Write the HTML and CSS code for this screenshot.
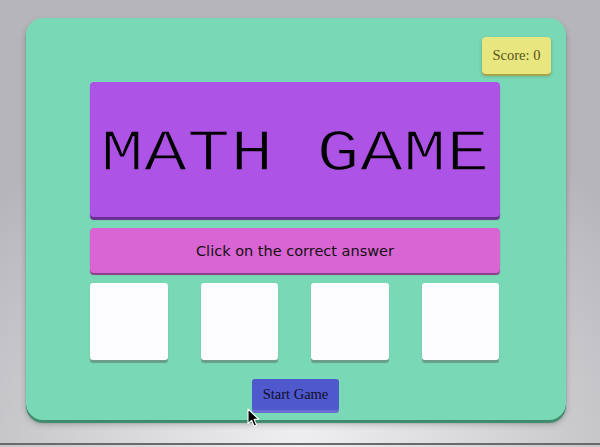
FILE: index.html
```html
<!DOCTYPE html>
<html>
<head>
<meta charset="utf-8">
<link rel="stylesheet" href="styles.css">
</head>
<body>
  <div class="stage">
    <div class="game">
      <div class="top-row">
        <div class="score">Score: 0</div>
      </div>
      <div class="column">
        <div class="title"><span class="title-text">MATH GAME</span></div>
        <div class="instruction">Click on the correct answer</div>
        <div class="choices">
          <div class="choice"></div>
          <div class="choice"></div>
          <div class="choice"></div>
          <div class="choice"></div>
        </div>
        <div class="start-wrap">
          <button class="start">Start Game</button>
        </div>
      </div>
    </div>
    <svg class="cursor" width="14" height="20" viewBox="0 0 14 20">
      <path d="M1 1 L1 15.5 L4.6 12.3 L7.2 18.2 L9.6 17.2 L7.1 11.4 L11.8 11.4 Z" fill="#000" stroke="#fff" stroke-width="1.1" stroke-linejoin="round"/>
    </svg>
  </div>
</body>
</html>
```

FILE: styles.css
```css
html, body {
  margin: 0;
  padding: 0;
}

body {
  width: 600px;
  height: 447px;
  overflow: hidden;
  background: radial-gradient(ellipse 420px 360px at 50% 100%, #efeff1 0%, #dcdcde 35%, #c4c3c7 75%, #b6b5b9 100%);
}

.stage {
  position: relative;
  height: 445px;
  padding-top: 18px;
  box-sizing: border-box;
  border-bottom: 2px solid #6a6a6a;
}

.game {
  margin-left: 26px;
  width: 540px;
  height: 402px;
  box-sizing: border-box;
  background: #79d9b6;
  border-radius: 17px;
  box-shadow: 0 3px 1px #3f8a6c, 0 4px 6px rgba(0, 0, 0, 0.25);
  padding: 19px 15px 0 64px;
}

.top-row {
  display: flex;
  justify-content: flex-end;
  height: 37px;
}

.score {
  width: 69px;
  height: 37px;
  box-sizing: border-box;
  background: #e8e67f;
  border-radius: 4px;
  box-shadow: 0 2px 1px #a8a44a, 0 2px 4px rgba(0, 0, 0, 0.2);
  font-family: "Liberation Serif", serif;
  font-size: 14.5px;
  color: #56551a;
  display: flex;
  align-items: center;
  justify-content: center;
}

.column {
  width: 410px;
  margin-top: 8px;
  display: flex;
  flex-direction: column;
}

.title {
  height: 135px;
  background: #ad53e5;
  border-radius: 4px;
  box-shadow: 0 3px 1px #6b2c92;
  display: flex;
  align-items: center;
  justify-content: center;
}

.title-text {
  display: inline-block;
  font-family: "Liberation Mono", "Courier New", monospace;
  font-size: 72px;
  line-height: 1;
  color: #000;
  white-space: pre;
  transform: scaleY(0.83);
  -webkit-text-stroke: 1.8px #ad53e5;
  margin-top: 9px;
}

.instruction {
  margin-top: 11px;
  height: 45px;
  background: #d964d3;
  border-radius: 4px;
  box-shadow: 0 2px 1px #8d3b89;
  font-family: "DejaVu Sans", Verdana, sans-serif;
  font-size: 14.5px;
  color: #111;
  display: flex;
  align-items: center;
  justify-content: center;
}

.choices {
  margin-top: 10px;
  display: flex;
  justify-content: space-between;
  padding-right: 1px;
}

.choice {
  width: 77.5px;
  height: 77px;
  background: #fdfcff;
  border-radius: 3px;
  box-shadow: 0 3px 1px #6a9d89;
}

.start-wrap {
  margin-top: 19px;
  display: flex;
  justify-content: center;
}

.start {
  width: 87px;
  height: 31px;
  margin-left: 1px;
  border: none;
  padding: 0;
  background: #5058cd;
  border-radius: 3px;
  box-shadow: 0 3px 0 #6a6ed0;
  font-family: "Liberation Serif", serif;
  font-size: 14.5px;
  color: #0e0e2a;
}

.cursor {
  position: absolute;
  left: 247px;
  top: 408px;
}
```
